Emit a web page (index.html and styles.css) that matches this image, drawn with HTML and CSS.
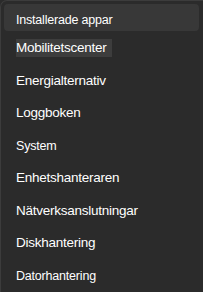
FILE: index.html
```html
<!DOCTYPE html>
<html lang="sv">

<head>
    <meta charset="UTF-8">
    <meta name="viewport" content="width=device-width, initial-scale=1.0">
    <title>Snabblänkar</title>
    <link rel="stylesheet" href="styles.css">
</head>

<body>
    <div class="menu">
        <div class="item active">Installerade appar</div>
        <div class="item"><span class="focus">Mobilitetscenter</span></div>
        <div class="item">Energialternativ</div>
        <div class="item">Loggboken</div>
        <div class="item small">System</div>
        <div class="item">Enhetshanteraren</div>
        <div class="item">Nätverksanslutningar</div>
        <div class="item">Diskhantering</div>
        <div class="item small">Datorhantering</div>
    </div>
</body>

</html>
```

FILE: styles.css
```css
body {
    margin: 0;
    background: #2b2b2b;
    font-family: "Liberation Sans", Arial, sans-serif;
    color: #ffffff;
}

.menu {
    height: 292px;
    box-sizing: border-box;
    padding: 3px 3px 0 3px;
    border-top: 1px solid #3c3c3c;
    border-left: 1px solid #3c3c3c;
    border-top-left-radius: 7px;
    background: #2b2b2b;
    overflow: hidden;
}

.item {
    padding: 2px 0 0 12px;
    line-height: 30.5px;
    font-size: 13.5px;
    letter-spacing: -0.25px;
    white-space: nowrap;
}

.item.small {
    font-size: 12.5px;
    letter-spacing: -0.2px;
}

.active {
    height: 22px;
    padding-top: 5px;
    line-height: 22px;
    font-size: 12.5px;
    letter-spacing: -0.2px;
    background: #383838;
    border-radius: 4px;
    margin-right: 1px;
}

.focus {
    display: inline-block;
    line-height: 18px;
    padding-right: 5px;
    background: #3d3d3d;
}
```
